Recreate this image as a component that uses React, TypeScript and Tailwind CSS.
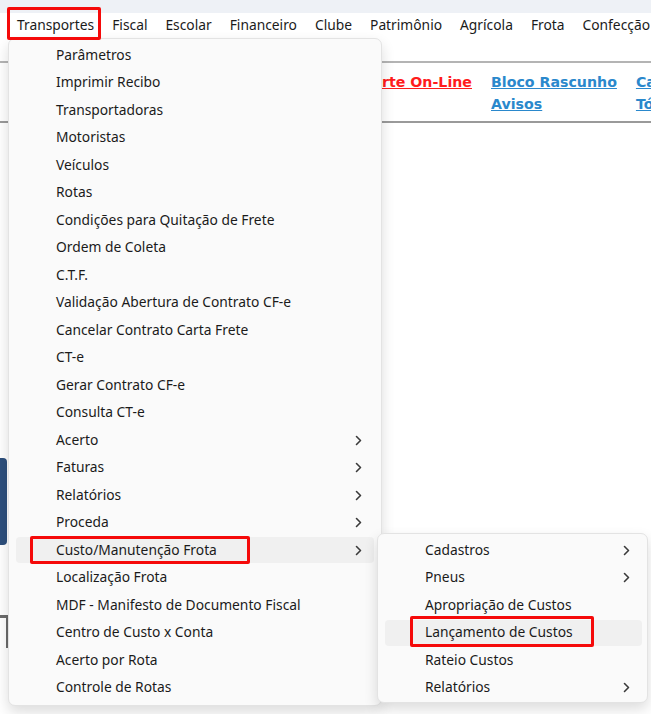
import React from 'react';

const menuFont = "font-['Segoe_UI','Noto_Sans',sans-serif]";

const topMenu = ['Transportes', 'Fiscal', 'Escolar', 'Financeiro', 'Clube', 'Patrimônio', 'Agrícola', 'Frota', 'Confecção'];

interface Item {
  label: string;
  sub?: boolean;
  active?: boolean;
}

const transportes: Item[] = [
  { label: 'Parâmetros' },
  { label: 'Imprimir Recibo' },
  { label: 'Transportadoras' },
  { label: 'Motoristas' },
  { label: 'Veículos' },
  { label: 'Rotas' },
  { label: 'Condições para Quitação de Frete' },
  { label: 'Ordem de Coleta' },
  { label: 'C.T.F.' },
  { label: 'Validação Abertura de Contrato CF-e' },
  { label: 'Cancelar Contrato Carta Frete' },
  { label: 'CT-e' },
  { label: 'Gerar Contrato CF-e' },
  { label: 'Consulta CT-e' },
  { label: 'Acerto', sub: true },
  { label: 'Faturas', sub: true },
  { label: 'Relatórios', sub: true },
  { label: 'Proceda', sub: true },
  { label: 'Custo/Manutenção Frota', sub: true, active: true },
  { label: 'Localização Frota' },
  { label: 'MDF - Manifesto de Documento Fiscal' },
  { label: 'Centro de Custo x Conta' },
  { label: 'Acerto por Rota' },
  { label: 'Controle de Rotas' },
];

const custos: Item[] = [
  { label: 'Cadastros', sub: true },
  { label: 'Pneus', sub: true },
  { label: 'Apropriação de Custos' },
  { label: 'Lançamento de Custos', active: true },
  { label: 'Rateio Custos' },
  { label: 'Relatórios', sub: true },
];

function Chevron() {
  return (
    <svg width="7" height="11" viewBox="0 0 7 11" className="ml-auto mr-[12px] shrink-0" aria-hidden="true">
      <polyline points="1.5,1.5 5.5,5.5 1.5,9.5" fill="none" stroke="#3a3a3a" strokeWidth="1.6" strokeLinecap="round" strokeLinejoin="round" />
    </svg>
  );
}

function MenuRow({ item, right }: { item: Item; right: string }) {
  return (
    <div className={`ml-[7px] ${right} h-[27.5px] flex items-center`}>
      <div className={`w-full h-[26px] flex items-center rounded-[4px] ${item.active ? 'bg-[#f0f0f0]' : ''}`}>
        <span className="pl-[40px] text-[13.8px] text-[#1b1b1b] whitespace-nowrap">{item.label}</span>
        {item.sub && <Chevron />}
      </div>
    </div>
  );
}

function Annotation({ className }: { className: string }) {
  return <div className={`absolute border-[3px] border-[#f50a0a] rounded-[2px] pointer-events-none ${className}`} />;
}

export default function App() {
  return (
    <div className={`relative w-[651px] h-[714px] overflow-hidden bg-white ${menuFont}`}>
      {/* browser strip */}
      <div className="h-[13px] bg-[#eef1f6]" />

      {/* top menu bar */}
      <nav className="h-[25px] flex items-center pl-[17px] gap-[18px] text-[13.8px] text-[#1b1b1b] whitespace-nowrap">
        {topMenu.map((m) => (
          <span key={m}>{m}</span>
        ))}
      </nav>
      <div className="h-[23px]" />

      {/* toolbar */}
      <div className="h-[62px] border-t-2 border-b-2 border-t-[#b4b4b4] border-b-[#9a9a9a] flex pt-[8px] font-['DejaVu_Sans',Verdana,sans-serif] font-bold text-[14.2px] leading-[22px] whitespace-nowrap">
        <div className="w-[472px] shrink-0 flex justify-end">
          <a className="text-[#ff1c1c] underline">Suporte On-Line</a>
        </div>
        <div className="ml-[19px] shrink-0 flex flex-col text-[#2a88cc]">
          <a className="underline">Bloco Rascunho</a>
          <a className="underline">Avisos</a>
        </div>
        <div className="ml-[19px] shrink-0 flex flex-col text-[#2a88cc]">
          <a className="underline">Calendário</a>
          <a className="underline">Tópicos</a>
        </div>
      </div>

      {/* page content fragments behind the menu */}
      <div className="mt-[335px] w-[7px] h-[87px] bg-[#2d4f7c] rounded-r-[4px]" />
      <div className="mt-[70px] w-[9px] h-[33px] border-t-[3px] border-r-[3px] border-[#6b6b6b]" />

      {/* Transportes dropdown */}
      <div className="absolute left-[8px] top-[38px] w-[374px] h-[668px] pt-[2.5px] bg-[#fafafa] border border-[#e3e3e3] rounded-[7px] shadow-[0_6px_14px_rgba(0,0,0,0.14)]">
        {transportes.map((item) => (
          <MenuRow key={item.label} item={item} right="mr-[7px]" />
        ))}
      </div>

      {/* Custo/Manutenção Frota submenu */}
      <div className="absolute left-[377px] top-[533px] w-[271px] h-[170px] pt-[2.5px] bg-[#fafafa] border border-[#e3e3e3] rounded-[7px] shadow-[0_6px_14px_rgba(0,0,0,0.14)]">
        {custos.map((item) => (
          <MenuRow key={item.label} item={item} right="mr-[5px]" />
        ))}
      </div>

      {/* red highlight boxes */}
      <Annotation className="left-[7px] top-[7px] w-[94px] h-[33px]" />
      <Annotation className="left-[30px] top-[536px] w-[220px] h-[28px]" />
      <Annotation className="left-[410px] top-[616px] w-[184px] h-[31px]" />
    </div>
  );
}
